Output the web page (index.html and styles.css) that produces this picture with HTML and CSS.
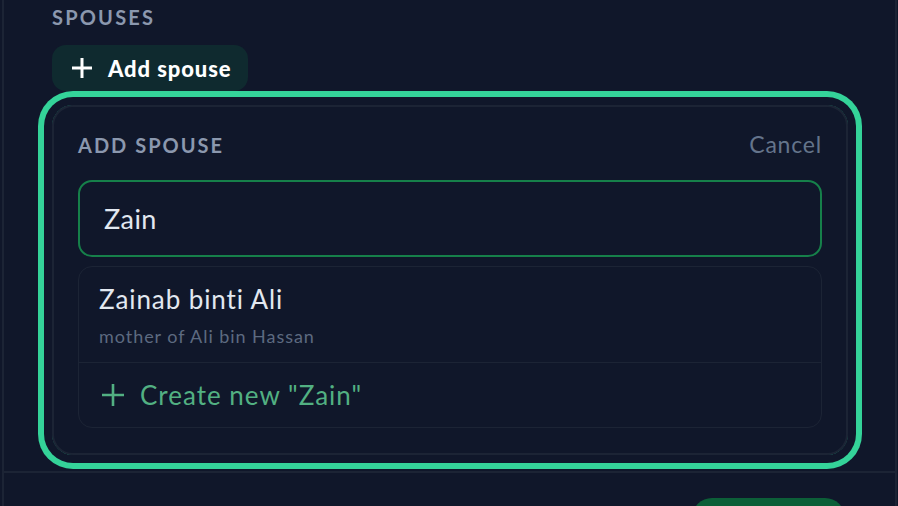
FILE: index.html
```html
<!DOCTYPE html>
<html lang="en">
<head>
<meta charset="utf-8">
<title>Add spouse</title>
<link rel="stylesheet" href="styles.css">
</head>
<body>
<div class="panel">
  <section class="section">
    <div class="section-label">SPOUSES</div>
    <button class="add-btn" type="button">
      <svg class="plus-icon" width="22" height="22" viewBox="0 0 22 22" aria-hidden="true">
        <path d="M11 1v20M1 11h20" stroke="#ffffff" stroke-width="3" fill="none"/>
      </svg>
      <span>Add spouse</span>
    </button>
    <div class="card">
      <div class="card-head">
        <div class="card-label">ADD SPOUSE</div>
        <div class="cancel">Cancel</div>
      </div>
      <div class="input">Zain</div>
      <div class="results">
        <div class="result">
          <div class="result-name">Zainab binti Ali</div>
          <div class="result-meta">mother of Ali bin Hassan</div>
        </div>
        <div class="create">
          <svg class="create-icon" width="22" height="22" viewBox="0 0 22 22" aria-hidden="true">
            <path d="M11 0v22M0 11h22" stroke="#52b082" stroke-width="2.6" fill="none"/>
          </svg>
          <span>Create new "Zain"</span>
        </div>
      </div>
    </div>
  </section>
  <footer class="footer">
    <div class="save-btn"></div>
  </footer>
</div>
</body>
</html>
```

FILE: styles.css
```css
html, body {
  margin: 0;
  padding: 0;
  background: #10172a;
  font-family: "Lato", "Inter", sans-serif;
  overflow: hidden;
}

.panel {
  margin: 0 1px 0 2px;
  border-left: 2px solid #1c2435;
  border-right: 2px solid #1c2435;
  min-height: 506px;
}

.section {
  padding: 5px 47px 16px 48px;
  border-bottom: 2px solid #1c2435;
}

.section-label {
  font-size: 20px;
  line-height: 24px;
  font-weight: 700;
  letter-spacing: 2.2px;
  color: #8b98ae;
}

.add-btn {
  margin-top: 16px;
  display: inline-flex;
  align-items: center;
  gap: 15px;
  height: 46px;
  padding: 0 16px 0 19px;
  border: none;
  border-radius: 14px;
  background: #0f2a2f;
  color: #ffffff;
  font-family: inherit;
  font-size: 22px;
  font-weight: 900;
  letter-spacing: 0.9px;
}

.plus-icon {
  display: block;
}

.card {
  margin-top: 14px;
  border: 2px solid #1c2435;
  border-radius: 21px;
  padding: 25px 24px 25px 24px;
  box-shadow: 0 0 0 8px #10172a, 0 0 0 14px #34d399;
}

.card-head {
  display: flex;
  justify-content: space-between;
  align-items: baseline;
}

.card-label {
  font-size: 20px;
  line-height: 24px;
  font-weight: 700;
  letter-spacing: 2px;
  color: #8b98ae;
}

.cancel {
  font-size: 23px;
  line-height: 24px;
  letter-spacing: 0.8px;
  color: #64748b;
}

.input {
  margin-top: 23px;
  height: 73px;
  border: 2px solid #16804a;
  border-radius: 14px;
  padding-left: 24px;
  display: flex;
  align-items: center;
  font-size: 27px;
  letter-spacing: 0.4px;
  color: #e2e8f0;
}

.results {
  margin-top: 9px;
  border: 1.5px solid #1c2435;
  border-radius: 14px;
}

.result {
  padding: 16px 20px 14px 20px;
  border-bottom: 1.5px solid #1c2435;
}

.result-name {
  font-size: 26px;
  line-height: 32px;
  letter-spacing: 0.9px;
  color: #e2e8f0;
}

.result-meta {
  margin-top: 9px;
  font-size: 18px;
  line-height: 24px;
  letter-spacing: 0.95px;
  color: #5d6a80;
}

.create {
  height: 64px;
  padding-left: 23px;
  display: flex;
  align-items: center;
  gap: 16px;
  font-size: 26px;
  letter-spacing: 1px;
  color: #52b082;
}

.create-icon {
  display: block;
}

.footer {
  display: flex;
  justify-content: flex-end;
  padding: 25px 50px 0 0;
}

.save-btn {
  width: 153px;
  height: 44px;
  border-radius: 20px;
  background: #0c5f38;
}
```
